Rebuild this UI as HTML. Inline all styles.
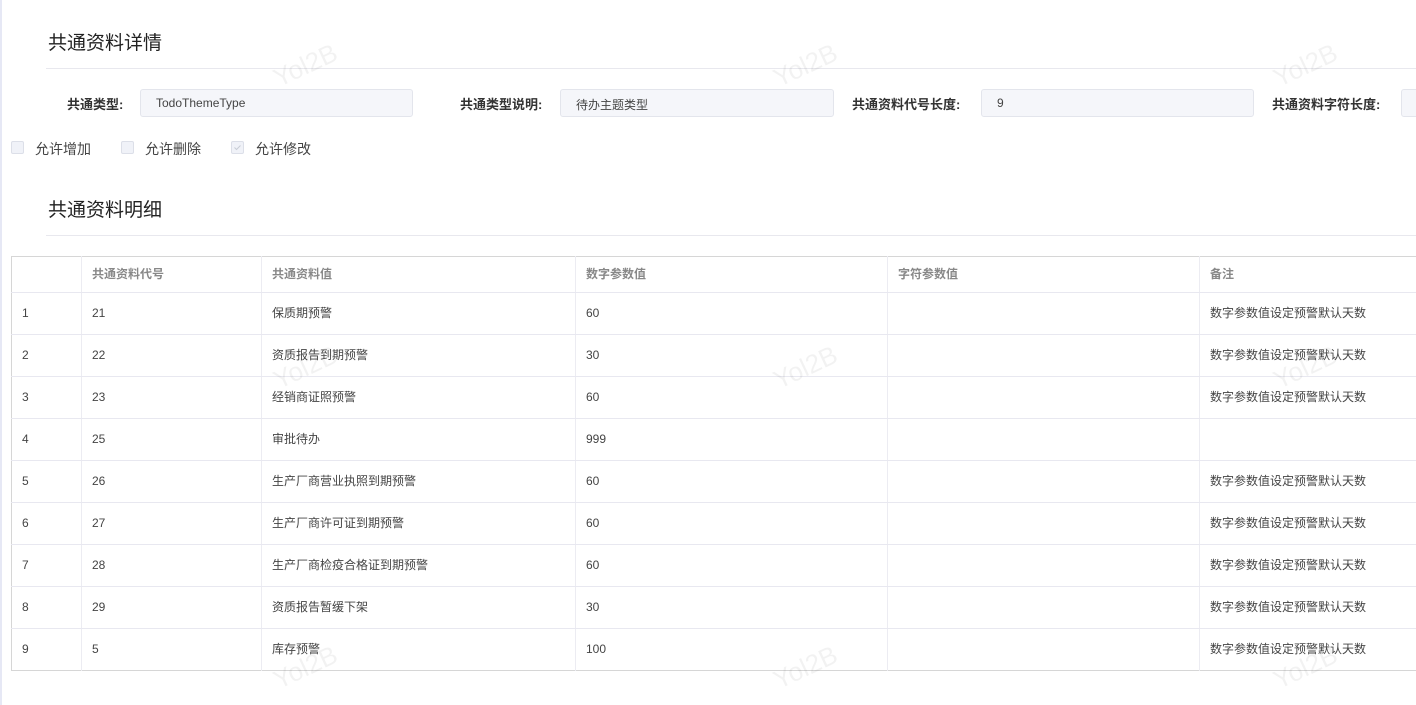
<!DOCTYPE html>
<html><head><meta charset="utf-8">
<style>
*{box-sizing:border-box;margin:0;padding:0}
html,body{width:1416px;height:705px;overflow:hidden;background:#fff;font-family:"Liberation Sans","Noto Sans CJK SC",sans-serif;color:#333;position:relative}
.lb{position:absolute;left:0;top:0;width:2px;height:705px;background:#e6e8f5}
.h{position:absolute;left:48px;font-size:19px;color:#222}
.hr{position:absolute;left:46px;right:0;height:1px;background:#e8e8ee}
.lab{position:absolute;top:94px;font-size:13px;font-weight:bold;color:#333}
.inp{position:absolute;top:89px;height:28px;background:#f5f6fa;border:1px solid #e3e5ec;border-radius:3px;font-size:12px;color:#444;padding:6px 0 0 15px}
.cb{position:absolute;top:141px;width:13px;height:13px;border:1px solid #dcdfe8;background:#f0f2f8;border-radius:2px}
.ct{position:absolute;top:139px;font-size:14px;color:#444}
table{position:absolute;left:11px;top:256px;width:1410px;border-collapse:collapse;border:1px solid #d6d6d6;font-size:12px;table-layout:fixed}
td,th{border-left:1px solid #ececf2;border-bottom:1px solid #e8e8f0;padding:0 0 2px 10px;text-align:left;color:#444;font-weight:normal}
th{height:36px;color:#888;font-weight:bold;font-size:12px}
td{height:42px}
tr:last-child td{border-bottom:none}
.wm{position:absolute;font-size:26px;color:rgba(0,0,0,0.05);transform:rotate(-25deg);font-family:"Liberation Sans",sans-serif}
</style></head><body>
<div class="lb"></div>
<div class="h" style="top:28px">共通资料详情</div>
<div class="hr" style="top:68px"></div>
<div class="lab" style="left:67px">共通类型:</div>
<div class="inp" style="left:140px;width:273px">TodoThemeType</div>
<div class="lab" style="left:460px">共通类型说明:</div>
<div class="inp" style="left:560px;width:274px">待办主题类型</div>
<div class="lab" style="left:852px">共通资料代号长度:</div>
<div class="inp" style="left:981px;width:273px">9</div>
<div class="lab" style="left:1272px">共通资料字符长度:</div>
<div class="inp" style="left:1401px;width:40px"></div>
<div class="cb" style="left:11px"></div><div class="ct" style="left:35px">允许增加</div>
<div class="cb" style="left:121px"></div><div class="ct" style="left:145px">允许删除</div>
<div class="cb" style="left:231px"><svg width="11" height="11" style="position:absolute;left:0;top:0"><path d="M2.5 5.5l2 2 4-4" stroke="#c8ccd6" fill="none" stroke-width="1"/></svg></div><div class="ct" style="left:255px">允许修改</div>
<div class="h" style="top:195px">共通资料明细</div>
<div class="hr" style="top:235px"></div>
<table>
<colgroup><col style="width:70px"><col style="width:180px"><col style="width:314px"><col style="width:312px"><col style="width:312px"><col style="width:222px"></colgroup>
<tr><th style="border-left:none"></th><th>共通资料代号</th><th>共通资料值</th><th>数字参数值</th><th>字符参数值</th><th>备注</th></tr>
<tr><td style="border-left:none">1</td><td>21</td><td>保质期预警</td><td>60</td><td></td><td>数字参数值设定预警默认天数</td></tr>
<tr><td style="border-left:none">2</td><td>22</td><td>资质报告到期预警</td><td>30</td><td></td><td>数字参数值设定预警默认天数</td></tr>
<tr><td style="border-left:none">3</td><td>23</td><td>经销商证照预警</td><td>60</td><td></td><td>数字参数值设定预警默认天数</td></tr>
<tr><td style="border-left:none">4</td><td>25</td><td>审批待办</td><td>999</td><td></td><td></td></tr>
<tr><td style="border-left:none">5</td><td>26</td><td>生产厂商营业执照到期预警</td><td>60</td><td></td><td>数字参数值设定预警默认天数</td></tr>
<tr><td style="border-left:none">6</td><td>27</td><td>生产厂商许可证到期预警</td><td>60</td><td></td><td>数字参数值设定预警默认天数</td></tr>
<tr><td style="border-left:none">7</td><td>28</td><td>生产厂商检疫合格证到期预警</td><td>60</td><td></td><td>数字参数值设定预警默认天数</td></tr>
<tr><td style="border-left:none">8</td><td>29</td><td>资质报告暂缓下架</td><td>30</td><td></td><td>数字参数值设定预警默认天数</td></tr>
<tr><td style="border-left:none">9</td><td>5</td><td>库存预警</td><td>100</td><td></td><td>数字参数值设定预警默认天数</td></tr>
</table>
<div class="wm" style="left:272px;top:50px">Yol2B</div>
<div class="wm" style="left:772px;top:50px">Yol2B</div>
<div class="wm" style="left:1272px;top:50px">Yol2B</div>
<div class="wm" style="left:272px;top:352px">Yol2B</div>
<div class="wm" style="left:772px;top:352px">Yol2B</div>
<div class="wm" style="left:1272px;top:352px">Yol2B</div>
<div class="wm" style="left:272px;top:652px">Yol2B</div>
<div class="wm" style="left:772px;top:652px">Yol2B</div>
<div class="wm" style="left:1272px;top:652px">Yol2B</div>
</body></html>
